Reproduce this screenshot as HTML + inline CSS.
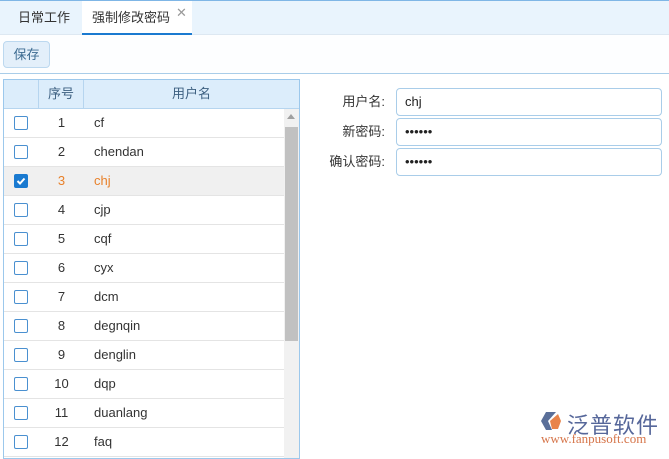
<!DOCTYPE html>
<html><head><meta charset="utf-8"><style>
*{box-sizing:border-box;margin:0;padding:0}
body{width:669px;height:456px;overflow:hidden;background:#fff;font-family:"Liberation Sans","Noto Sans CJK SC",sans-serif;font-size:13px;color:#333;position:relative}
.tabs{position:absolute;left:0;top:0;width:669px;height:35px;background:#e9f4fd;border-top:1px solid #7fb6e6;border-bottom:1px solid #dde8f2}
.tab{position:absolute;top:0;height:34px;line-height:33px;font-size:13px;color:#333}
.t1{left:18px}
.t2{left:82px;width:110px;background:#fff;border-bottom:2px solid #1a7ad0;padding-left:10px}
.x{position:absolute;left:94px;top:-5px;color:#999;font-size:13px}
.toolbar{position:absolute;left:0;top:35px;width:669px;height:39px;border-bottom:1px solid #a9cde9;background:#fdfeff}
.btn{position:absolute;left:3px;top:6px;width:47px;height:27px;border:1px solid #bcd8ef;border-radius:4px;background:#e3effa;color:#3c6b91;text-align:center;line-height:25px;font-size:13px}
.grid{position:absolute;left:3px;top:79px;width:297px;height:380px;border:1px solid #9cc8ec;overflow:hidden}
.hd{position:absolute;left:0;top:0;width:295px;height:29px;background:#dcedfb;border-bottom:1px solid #b6d5ef}
.hd div{position:absolute;top:0;height:28px;line-height:28px;color:#3c5f80;text-align:center;border-right:1px solid #b6d5ef}
.row{position:absolute;left:0;width:280px;height:29px;border-bottom:1px solid #e4e4e4;line-height:28px}
.row.sel{background:#f0f0f0;color:#e8812b}
.cb{position:absolute;left:10px;top:7px;width:14px;height:14px;border:1px solid #4a90d0;border-radius:2px;background:#fff}
.sel .cb{background:#1a7ad0;border-color:#1a7ad0}
.cb svg{position:absolute;left:0;top:0;display:block}
.n{position:absolute;left:35px;width:45px;text-align:center}
.u{position:absolute;left:90px}
.sb{position:absolute;left:280px;top:29px;width:15px;height:360px;background:#f1f1f1}
.th{position:absolute;left:1px;top:18px;width:13px;height:214px;background:#c1c1c1}
.lab{position:absolute;width:90px;left:295px;text-align:right;font-size:13px;color:#333}
.inp{position:absolute;left:396px;width:266px;height:28px;border:1px solid #a9cde9;border-radius:4px;padding-left:8px;line-height:26px;font-size:13px;color:#222}
</style></head><body>
<div class="tabs"><div class="tab t1">日常工作</div><div class="tab t2">强制修改密码<span class="x">✕</span></div></div>
<div class="toolbar"><div class="btn">保存</div></div>
<div class="grid">
<div class="hd"><div style="left:0;width:35px"></div><div style="left:35px;width:45px">序号</div><div style="left:80px;width:215px;border:0">用户名</div></div>
<div class="row" style="top:29px"><div class="cb"></div><div class="n">1</div><div class="u">cf</div></div>
<div class="row" style="top:58px"><div class="cb"></div><div class="n">2</div><div class="u">chendan</div></div>
<div class="row sel" style="top:87px"><div class="cb"><svg width="12" height="12" viewBox="0 0 12 12"><path d="M2.5 6l2.5 2.5 4.5-5" stroke="#fff" stroke-width="2" fill="none"/></svg></div><div class="n">3</div><div class="u">chj</div></div>
<div class="row" style="top:116px"><div class="cb"></div><div class="n">4</div><div class="u">cjp</div></div>
<div class="row" style="top:145px"><div class="cb"></div><div class="n">5</div><div class="u">cqf</div></div>
<div class="row" style="top:174px"><div class="cb"></div><div class="n">6</div><div class="u">cyx</div></div>
<div class="row" style="top:203px"><div class="cb"></div><div class="n">7</div><div class="u">dcm</div></div>
<div class="row" style="top:232px"><div class="cb"></div><div class="n">8</div><div class="u">degnqin</div></div>
<div class="row" style="top:261px"><div class="cb"></div><div class="n">9</div><div class="u">denglin</div></div>
<div class="row" style="top:290px"><div class="cb"></div><div class="n">10</div><div class="u">dqp</div></div>
<div class="row" style="top:319px"><div class="cb"></div><div class="n">11</div><div class="u">duanlang</div></div>
<div class="row" style="top:348px"><div class="cb"></div><div class="n">12</div><div class="u">faq</div></div>
<div class="sb"><div style="position:absolute;left:3px;top:5px;width:0;height:0;border-left:4px solid transparent;border-right:4px solid transparent;border-bottom:5px solid #a0a0a0"></div><div class="th"></div></div>
</div>
<div class="lab" style="top:91px">用户名:</div><div class="inp" style="top:88px">chj</div>
<div class="lab" style="top:121px">新密码:</div><div class="inp" style="top:118px">••••••</div>
<div class="lab" style="top:151px">确认密码:</div><div class="inp" style="top:148px">••••••</div>
<div style="position:absolute;left:540px;top:410px;width:20px;height:20px"><svg width="22" height="22" viewBox="0 0 22 22"><path d="M6 2h10l-8 9 4 9H6L1 11z" fill="#5a6f99"/><path d="M10 11l8-7 3 7-3 8h-6z" fill="#e8834a"/></svg></div>
<div style="position:absolute;left:567px;top:408px;font-size:22px;color:#56679a;letter-spacing:1px">泛普软件</div>
<div style="position:absolute;left:541px;top:431px;font-size:13px;color:#d6754a;font-family:'Liberation Serif',serif">www.fanpusoft.com</div>
</body></html>
